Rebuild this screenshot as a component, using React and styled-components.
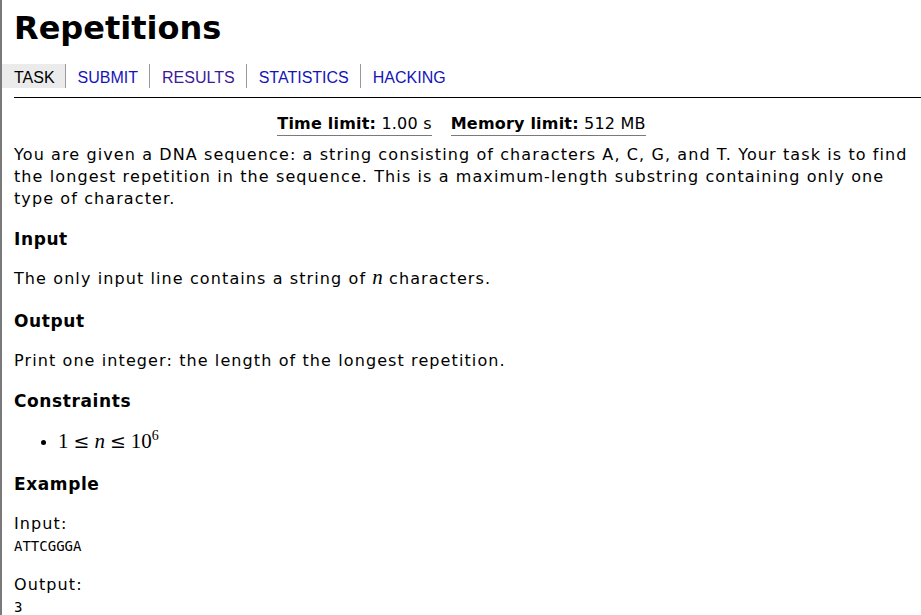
import React from "react";
import styled, { createGlobalStyle } from "styled-components";

const Global = createGlobalStyle`
  html, body {
    margin: 0;
    padding: 0;
    background: #fff;
  }
  body {
    font-family: "DejaVu Sans", Verdana, sans-serif;
    font-size: 16px;
    color: #000;
  }
`;

const Page = styled.div`
  border-left: 2px solid #7a7a7a;
  min-height: 100vh;
  box-sizing: border-box;
`;

const Header = styled.div`
  padding: 8px 0 0 12px;
`;

const Title = styled.h1`
  margin: 0;
  font-size: 32px;
  line-height: 40px;
  font-weight: bold;
`;

const Nav = styled.nav`
  display: flex;
  align-items: center;
  margin-top: 16px;
  padding-bottom: 9px;
  border-bottom: 1px solid #000;
  font-family: "Liberation Sans", Arial, sans-serif;
  font-size: 16px;
`;

const Tab = styled.a`
  display: block;
  padding: 5px 12px 1px;
  line-height: 18px;
  text-decoration: none;
  color: ${(p) => (p.$active ? "#000" : p.$visited ? "#3b1a9c" : "#1414b8")};
  background: ${(p) => (p.$active ? "#ebebeb" : "transparent")};
  border-left: ${(p) => (p.$first ? "none" : "1px solid #999")};
  margin-left: ${(p) => (p.$first ? "-12px" : "0")};
  padding-right: ${(p) => (p.$first ? "10px" : "11px")};
`;

const Content = styled.div`
  padding: 15px 0 0 12px;
  font-size: 16px;
  line-height: 22px;
  letter-spacing: 1.1px;
`;

const Limits = styled.div`
  display: flex;
  justify-content: center;
  gap: 19px;
  margin-bottom: 8px;
  margin-right: 12px;
  letter-spacing: 0.2px;
`;

const Limit = styled.span`
  border-bottom: 1px solid #7a7a7a;
  line-height: 22px;
  b {
    font-weight: bold;
  }
`;

const Text = styled.p`
  margin: 0;
  padding-bottom: ${(p) => (p.$math ? "2px" : "0")};
`;

const Heading = styled.h2`
  margin: 18px 0;
  font-size: 17px;
  line-height: 22px;
  font-weight: bold;
  letter-spacing: 0.6px;
`;

const Math = styled.span`
  font-family: "Liberation Serif", "DejaVu Serif", serif;
  font-size: 21px;
  letter-spacing: 0;
  line-height: 0;
  i {
    font-style: italic;
  }
  sup {
    font-size: 14px;
    line-height: 0;
  }
`;

const Rel = styled.span`
  font-family: "DejaVu Serif", serif;
  font-size: 19px;
  margin: 0 5px;
`;

const List = styled.ul`
  margin: 20px 0 19px;
  padding-left: 44px;
  line-height: 22px;
`;

const Label = styled.p`
  margin: 17px 0 0;
  line-height: 22px;
`;

const Code = styled.pre`
  margin: 0;
  font-family: "DejaVu Sans Mono", "Liberation Mono", monospace;
  font-size: 14px;
  line-height: 22px;
  letter-spacing: 0;
`;

const tabs = [
  { name: "TASK", active: true },
  { name: "SUBMIT" },
  { name: "RESULTS", visited: true },
  { name: "STATISTICS" },
  { name: "HACKING" },
];

export default function App() {
  return (
    <Page>
      <Global />
      <Header>
        <Title>Repetitions</Title>
        <Nav>
          {tabs.map((t, i) => (
            <Tab
              key={t.name}
              href="#"
              $first={i === 0}
              $active={t.active}
              $visited={t.visited}
            >
              {t.name}
            </Tab>
          ))}
        </Nav>
      </Header>
      <Content>
        <Limits>
          <Limit>
            <b>Time limit:</b> 1.00 s
          </Limit>
          <Limit>
            <b>Memory limit:</b> 512 MB
          </Limit>
        </Limits>
        <Text>
          You are given a DNA sequence: a string consisting of characters A, C,
          G, and T. Your task is to find the longest repetition in the
          sequence. This is a maximum-length substring containing only one type
          of character.
        </Text>
        <Heading>Input</Heading>
        <Text $math>
          The only input line contains a string of{" "}
          <Math>
            <i>n</i>
          </Math>{" "}
          characters.
        </Text>
        <Heading>Output</Heading>
        <Text>Print one integer: the length of the longest repetition.</Text>
        <Heading>Constraints</Heading>
        <List>
          <li>
            <Math>
              1<Rel>≤</Rel>
              <i>n</i>
              <Rel>≤</Rel>10<sup>6</sup>
            </Math>
          </li>
        </List>
        <Heading>Example</Heading>
        <Label>Input:</Label>
        <Code>ATTCGGGA</Code>
        <Label>Output:</Label>
        <Code>3</Code>
      </Content>
    </Page>
  );
}
